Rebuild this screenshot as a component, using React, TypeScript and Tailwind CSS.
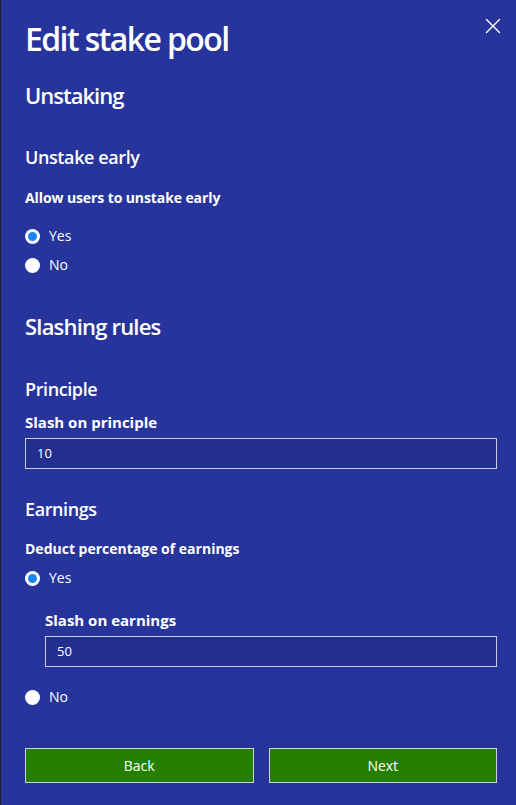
import { X } from "lucide-react";

const font = { fontFamily: '"Open Sans", "Noto Sans", sans-serif' };

function Radio({ label, checked }: { label: string; checked?: boolean }) {
  return (
    <label className="flex h-5 items-center gap-[9px]">
      <span className="flex h-[15px] w-[15px] items-center justify-center rounded-full bg-white">
        {checked && <span className="h-[9px] w-[9px] rounded-full bg-[#1a86f2]" />}
      </span>
      <span className="text-[14px] leading-5 text-white">{label}</span>
    </label>
  );
}

function Field({ value }: { value: string }) {
  return (
    <div className="flex h-[31px] items-center border border-[#c9cbe0] bg-[#232e8f] px-[11px] text-[13px] text-white">
      {value}
    </div>
  );
}

export default function App() {
  return (
    <div
      className="relative min-h-[805px] border-l border-[#1c1c30] bg-[#26349b] pl-6 pr-[19px] pt-[19px] text-white"
      style={font}
    >
      <button className="absolute right-[10px] top-[13px] text-white">
        <X size={26} strokeWidth={1.3} />
      </button>

      <h1 className="text-[32px] font-semibold leading-[40px] tracking-[-1.6px]">Edit stake pool</h1>

      <h2 className="mt-[22px] text-[22px] font-semibold leading-[28px] tracking-[-1px]">Unstaking</h2>
      <h3 className="mt-[36px] text-[18px] font-semibold leading-6 tracking-[-0.4px]">Unstake early</h3>
      <p className="mt-[19px] text-[14px] font-bold leading-5 tracking-[-0.1px]">Allow users to unstake early</p>
      <div className="mt-[18px] flex flex-col gap-[9px]">
        <Radio label="Yes" checked />
        <Radio label="No" />
      </div>

      <h2 className="mt-[37px] text-[22px] font-semibold leading-[28px] tracking-[-0.8px]">Slashing rules</h2>
      <h3 className="mt-[37px] text-[18px] font-semibold leading-6 tracking-[-0.4px]">Principle</h3>
      <p className="mt-[11px] text-[15px] font-bold leading-5">Slash on principle</p>
      <div className="mt-[6px]">
        <Field value="10" />
      </div>

      <h3 className="mt-[28px] text-[18px] font-semibold leading-6 tracking-[-0.4px]">Earnings</h3>
      <p className="mt-[18px] text-[14px] font-bold leading-5">Deduct percentage of earnings</p>
      <div className="mt-[9px]">
        <Radio label="Yes" checked />
      </div>
      <div className="ml-5">
        <p className="mt-[22px] text-[15px] font-bold leading-5">Slash on earnings</p>
        <div className="mt-[6px]">
          <Field value="50" />
        </div>
      </div>
      <div className="mt-[20px]">
        <Radio label="No" />
      </div>

      <div className="mt-[41px] grid grid-cols-2 gap-[15px]">
        <button className="h-[35px] border border-[#cfd2d8] bg-[#268000] text-[14px] text-white">Back</button>
        <button className="h-[35px] border border-[#cfd2d8] bg-[#268000] text-[14px] text-white">Next</button>
      </div>
    </div>
  );
}
